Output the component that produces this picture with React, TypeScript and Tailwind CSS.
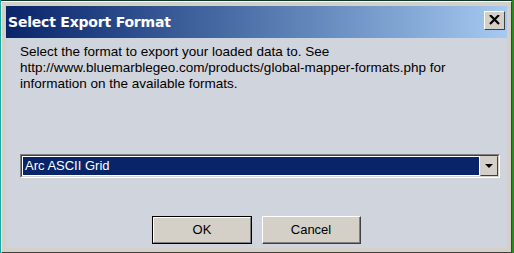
export default function App() {
  return (
    <div className="w-[514px] h-[253px] bg-[#0b3a2a] flex">
      {/* desktop strip on the left */}
      <div className="w-[1px] h-full bg-[#1aa8a0]" />
      <div className="w-[511px] h-[252px] mt-[1px] border-t border-l border-t-[#ffffff] border-l-[#ffffff] border-r border-b border-r-[#404040] border-b-[#404040] bg-[#d4d0c8] p-[4px] flex flex-col">
        {/* title bar */}
        <div className="h-[32px] flex items-center justify-between bg-gradient-to-r from-[#0a246a] to-[#a6caf0] pl-[2px] pr-[2px]">
          <span className="text-white font-bold text-[14px] font-['DejaVu_Sans',sans-serif] tracking-[-0.2px]">
            Select Export Format
          </span>
          <button className="w-[21px] h-[19px] mb-[4px] bg-[#d4d0c8] border-t border-l border-t-[#ffffff] border-l-[#ffffff] border-r border-b border-r-[#404040] border-b-[#404040] flex items-center justify-center">
            <svg width="11" height="10" viewBox="0 0 11 10">
              <path d="M1 0 L10 9 M10 0 L1 9" stroke="#000" strokeWidth="2.2" />
            </svg>
          </button>
        </div>
        {/* body */}
        <div className="flex-1 bg-[#d0d4dc] font-['Liberation_Sans',Arial,sans-serif] text-black">
          <p className="pl-[14px] pr-[6px] pt-[6px] text-[13.5px] leading-[16px] whitespace-nowrap">
            Select the format to export your loaded data to. See
            <br />
            http://www.bluemarblegeo.com/products/global-mapper-formats.php for
            <br />
            information on the available formats.
          </p>
          <div className="ml-[14px] mt-[62px] w-[480px] h-[24px] border-t border-l border-t-[#808080] border-l-[#808080] border-r border-b border-r-[#ffffff] border-b-[#ffffff]">
            <div className="h-full flex border-t border-l border-t-[#404040] border-l-[#404040] border-r border-b border-r-[#d4d0c8] border-b-[#d4d0c8] bg-white">
              <div className="flex-1 m-[1px] bg-[#0a246a] text-white text-[13px] leading-[16px] pl-[2px] flex items-center">
                Arc ASCII Grid
              </div>
              <div className="w-[18px] h-full border-t border-l border-t-[#d4d0c8] border-l-[#d4d0c8] border-r border-b border-r-[#404040] border-b-[#404040] bg-[#d4d0c8] flex items-center justify-center">
                <svg width="8" height="4" viewBox="0 0 8 4">
                  <path d="M0 0 H8 L4 4 Z" fill="#000" />
                </svg>
              </div>
            </div>
          </div>
          <div className="flex gap-[10px] ml-[146px] mt-[38px]">
            <button className="w-[100px] h-[28px] border border-black bg-[#d4d0c8]">
              <div className="h-full flex items-center justify-center text-[13px] border-t border-l border-t-[#ffffff] border-l-[#ffffff] border-r border-b border-r-[#808080] border-b-[#808080]">
                OK
              </div>
            </button>
            <button className="w-[99px] h-[28px] bg-[#d4d0c8] border-t border-l border-t-[#ffffff] border-l-[#ffffff] border-r border-b border-r-[#404040] border-b-[#404040]">
              <div className="h-full flex items-center justify-center text-[13px] border-r border-b border-r-[#808080] border-b-[#808080]">
                Cancel
              </div>
            </button>
          </div>
        </div>
      </div>
      <div className="w-[2px] h-full bg-[#2a8a20]" />
    </div>
  )
}
